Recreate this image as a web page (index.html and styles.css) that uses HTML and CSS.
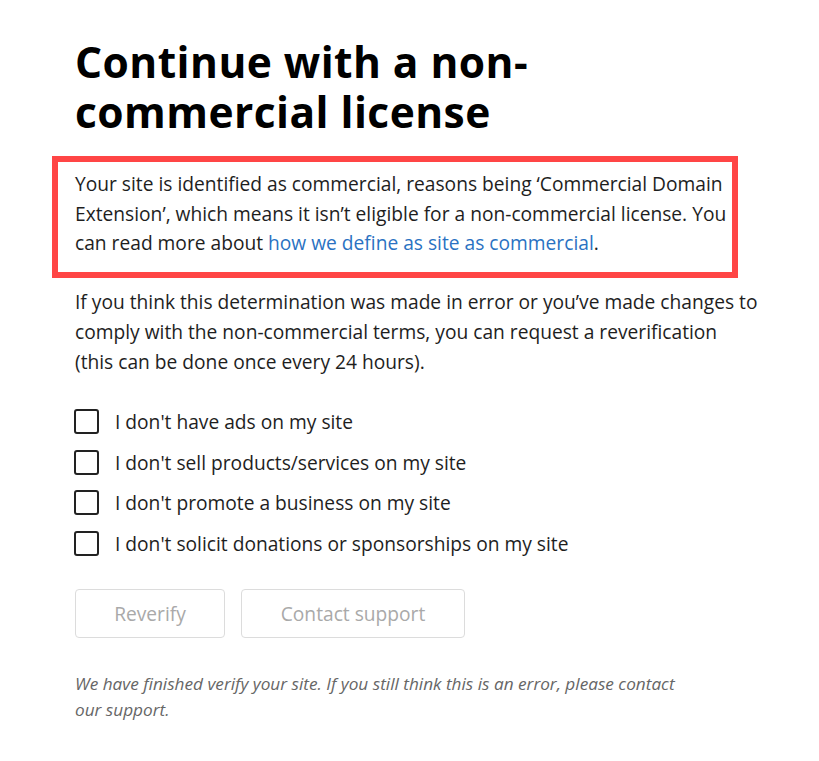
FILE: index.html
```html
<!DOCTYPE html>
<html lang="en">
<head>
<meta charset="utf-8">
<title>Continue with a non-commercial license</title>
<link rel="stylesheet" href="styles.css">
</head>
<body>
<main class="page">
  <h1 class="title">Continue with a non-commercial license</h1>
  <div class="highlight">
    <p class="text">Your site is identified as commercial, reasons being ‘Commercial Domain Extension’, which means it isn’t eligible for a non-commercial license. You can read more about <a class="link" href="#">how we define as site as commercial</a>.</p>
  </div>
  <p class="text text-second">If you think this determination was made in error or you’ve made changes to comply with the non-commercial terms, you can request a reverification (this can be done once every 24 hours).</p>
  <ul class="checks">
    <li class="check"><span class="box"></span><span class="label">I don't have ads on my site</span></li>
    <li class="check"><span class="box"></span><span class="label">I don't sell products/services on my site</span></li>
    <li class="check"><span class="box"></span><span class="label">I don't promote a business on my site</span></li>
    <li class="check"><span class="box"></span><span class="label">I don't solicit donations or sponsorships on my site</span></li>
  </ul>
  <div class="actions">
    <button class="btn btn-reverify" type="button">Reverify</button>
    <button class="btn btn-support" type="button">Contact support</button>
  </div>
  <p class="note">We have finished verify your site. If you still think this is an error, please contact our support.</p>
</main>
</body>
</html>
```
FILE: styles.css
```css
html, body {
  margin: 0;
  padding: 0;
  background: #ffffff;
}
body {
  font-family: "Open Sans", "Noto Sans", sans-serif;
  color: #1e1e1e;
}
.page {
  padding: 37px 0 0 75px;
  width: 684px;
}
.title {
  margin: 0;
  max-width: 560px;
  font-size: 42.5px;
  line-height: 50px;
  font-weight: 700;
  letter-spacing: 0.45px;
  color: #000;
}
.highlight {
  margin: 19px 0 0 -23px;
  width: 657px;
  border: 6px solid #ff4545;
  padding: 7px 0 14px 17px;
}
.text {
  margin: 0;
  font-size: 19.2px;
  line-height: 29.5px;
}
.link {
  color: #2a72c2;
  text-decoration: none;
}
.text-second {
  margin-top: 9px;
  line-height: 30px;
}
.checks {
  list-style: none;
  margin: 33px 0 0 -1px;
  padding: 0;
  display: flex;
  flex-direction: column;
  gap: 16.7px;
}
.check {
  display: flex;
  align-items: center;
  gap: 16px;
  height: 24px;
}
.box {
  width: 21px;
  height: 21px;
  border: 2px solid #222;
  border-radius: 3px;
  flex: none;
}
.label {
  font-size: 19.2px;
}
.actions {
  display: flex;
  gap: 16px;
  margin-top: 33px;
}
.btn {
  font-family: "Open Sans", "Noto Sans", sans-serif;
  background: #fff;
  border: 1px solid #dcdcdc;
  border-radius: 4px;
  height: 49px;
  font-size: 19.2px;
  color: #a9a9a9;
  padding: 0;
}
.btn-reverify { width: 150px; }
.btn-support { width: 224px; }
.note {
  margin: 33px 0 0 0;
  max-width: 610px;
  font-size: 17.2px;
  line-height: 26px;
  font-style: italic;
  color: #666;
}
```
